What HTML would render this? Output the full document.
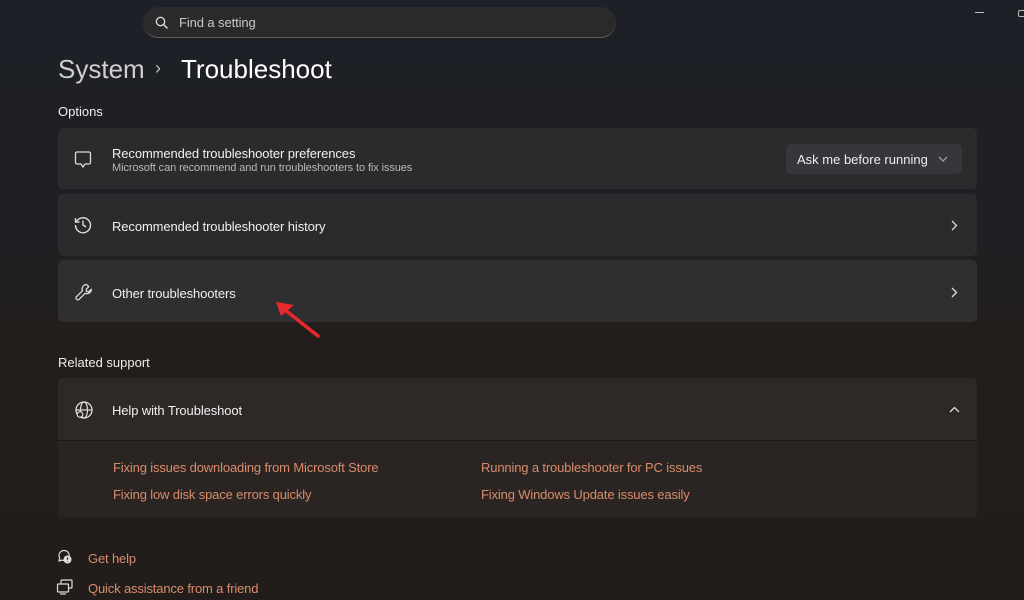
<!DOCTYPE html>
<html><head><meta charset="utf-8"><style>
*{margin:0;padding:0;box-sizing:border-box}
body{width:1024px;height:600px;overflow:hidden;font-family:"Liberation Sans",sans-serif;background:linear-gradient(180deg,#1e2027 0%,#1f2026 35%,#221e1c 55%,#221d1a 100%);color:#fff;position:relative}
.abs{position:absolute}
.search{left:143px;top:7px;width:473px;height:31px;border-radius:16px;background:#2a2a2c;border-bottom:1px solid #6a5a52}
.search span{position:absolute;left:36px;top:8px;font-size:13px;color:#c8c8c8;letter-spacing:-0.1px}
.card{position:absolute;left:58px;width:919px;border-radius:5px}
.t{position:absolute;font-size:13px;color:#f0f0f0;letter-spacing:-0.1px}
.link{position:absolute;font-size:13px;color:#d98c6c;letter-spacing:-0.15px}
svg{position:absolute}
</style></head><body>
<div class="abs search"><svg style="left:12px;top:9px" width="14" height="14" viewBox="0 0 14 14"><circle cx="5.5" cy="5.5" r="4.2" fill="none" stroke="#ddd" stroke-width="1.3"/><path d="M8.5 8.5L12.5 12.5" stroke="#ddd" stroke-width="1.4"/></svg><span>Find a setting</span></div>
<div class="abs" style="left:975px;top:12px;width:9px;height:1px;background:#bbb"></div>
<div class="abs" style="left:1018px;top:10px;width:8px;height:7px;border:1px solid #bbb;border-radius:2px"></div>
<div class="abs" style="left:58px;top:54px;font-size:26px;color:#cfcfcf">System</div>
<div class="abs" style="left:155px;top:58px;font-size:18px;color:#bbb">›</div>
<div class="abs" style="left:181px;top:54px;font-size:26px;color:#fff">Troubleshoot</div>
<div class="abs" style="left:58px;top:104px;font-size:13px;color:#eee">Options</div>

<div class="card" style="top:128px;height:61px;background:#2b2b2e">
<svg style="left:16px;top:22px" width="18" height="20" viewBox="0 0 18 20"><path d="M3 2h12a1.5 1.5 0 0 1 1.5 1.5v9a1.5 1.5 0 0 1-1.5 1.5h-4l-2 3-2-3H3a1.5 1.5 0 0 1-1.5-1.5v-9A1.5 1.5 0 0 1 3 2z" fill="none" stroke="#ddd" stroke-width="1.3"/></svg>
<div class="t" style="left:54px;top:18px">Recommended troubleshooter preferences</div>
<div class="t" style="left:54px;top:34px;font-size:11px;color:#b8b8b8">Microsoft can recommend and run troubleshooters to fix issues</div>
<div class="abs" style="left:728px;top:16px;width:176px;height:30px;border-radius:5px;background:#37363a"><span style="position:absolute;left:11px;top:8px;font-size:13px;color:#eee">Ask me before running</span><svg style="left:152px;top:12px" width="10" height="6" viewBox="0 0 10 6"><path d="M1 1l4 4 4-4" fill="none" stroke="#aaa" stroke-width="1.2"/></svg></div>
</div>

<div class="card" style="top:194px;height:62px;background:#2b2b2e">
<svg style="left:15px;top:21px" width="20" height="20" viewBox="0 0 20 20"><path d="M3.5 6.5A7.5 7.5 0 1 1 2.5 10" fill="none" stroke="#ddd" stroke-width="1.4"/><path d="M2.5 3v4h4" fill="none" stroke="#ddd" stroke-width="1.4"/><path d="M10 5.5V10l3 2" fill="none" stroke="#ddd" stroke-width="1.4"/></svg>
<div class="t" style="left:54px;top:25px">Recommended troubleshooter history</div>
<svg style="left:893px;top:26px" width="7" height="11" viewBox="0 0 7 11"><path d="M1 1l4.5 4.5L1 10" fill="none" stroke="#ddd" stroke-width="1.3"/></svg>
</div>

<div class="card" style="top:260px;height:62px;background:#2f2e31">
<svg style="left:16px;top:22px" width="20" height="20" viewBox="0 0 20 20"><path d="M12.5 2.5a4.5 4.5 0 0 0-4 6.2L2.5 14.7a1.8 1.8 0 0 0 2.6 2.6l6-6a4.5 4.5 0 0 0 6.2-4L14.8 9.7 12.5 9.5 12.3 7.2l2.5-2.5z" fill="none" stroke="#ddd" stroke-width="1.3" stroke-linejoin="round"/></svg>
<div class="t" style="left:54px;top:26px">Other troubleshooters</div>
<svg style="left:893px;top:27px" width="7" height="11" viewBox="0 0 7 11"><path d="M1 1l4.5 4.5L1 10" fill="none" stroke="#ddd" stroke-width="1.3"/></svg>
</div>
<svg style="left:272px;top:298px" width="52" height="42" viewBox="0 0 52 42"><path d="M46 38L8 8" stroke="#e8282a" stroke-width="3.5" stroke-linecap="round"/><path d="M4 4l18 3-13 11z" fill="#e8282a"/></svg>

<div class="abs" style="left:58px;top:355px;font-size:13px;color:#eee">Related support</div>
<div class="card" style="top:378px;height:62px;background:#2d2927;border-radius:5px 5px 0 0">
<svg style="left:16px;top:22px" width="20" height="20" viewBox="0 0 20 20"><circle cx="10" cy="10" r="8" fill="none" stroke="#ddd" stroke-width="1.3"/><ellipse cx="10" cy="10" rx="3.5" ry="8" fill="none" stroke="#ddd" stroke-width="1.2"/><path d="M2 10h16" stroke="#ddd" stroke-width="1.2"/><circle cx="6" cy="14.5" r="2.8" fill="#2d2927" stroke="#ddd" stroke-width="1.2"/></svg>
<div class="t" style="left:54px;top:25px">Help with Troubleshoot</div>
<svg style="left:891px;top:28px" width="11" height="7" viewBox="0 0 11 7"><path d="M1 6l4.5-4.5L10 6" fill="none" stroke="#ddd" stroke-width="1.3"/></svg>
</div>
<div class="card" style="top:440px;height:78px;background:#2a2522;border-top:1px solid #1a1716;border-radius:0 0 5px 5px">
<div class="link" style="left:55px;top:19px">Fixing issues downloading from Microsoft Store</div>
<div class="link" style="left:55px;top:46px">Fixing low disk space errors quickly</div>
<div class="link" style="left:423px;top:19px">Running a troubleshooter for PC issues</div>
<div class="link" style="left:423px;top:46px">Fixing Windows Update issues easily</div>
</div>

<svg style="left:57px;top:549px" width="16" height="16" viewBox="0 0 16 16"><path d="M7 1.5a5 5 0 0 0-4.3 7.5L2 12l3-1a5 5 0 1 0 2-9.5z" fill="none" stroke="#ddd" stroke-width="1.2"/><circle cx="10.5" cy="10.5" r="4" fill="#ddd"/><path d="M10.5 8.5v2.2M10.5 12v.5" stroke="#222" stroke-width="1.2"/></svg>
<div class="link" style="left:88px;top:551px">Get help</div>
<svg style="left:56px;top:579px" width="18" height="16" viewBox="0 0 18 16"><rect x="5" y="1" width="11" height="8" rx="1" fill="none" stroke="#ddd" stroke-width="1.2"/><rect x="1.5" y="5" width="11" height="8" rx="1" fill="#221d1a" stroke="#ddd" stroke-width="1.2"/><path d="M4 15h6" stroke="#ddd" stroke-width="1.2"/></svg>
<div class="link" style="left:88px;top:581px">Quick assistance from a friend</div>
</body></html>
